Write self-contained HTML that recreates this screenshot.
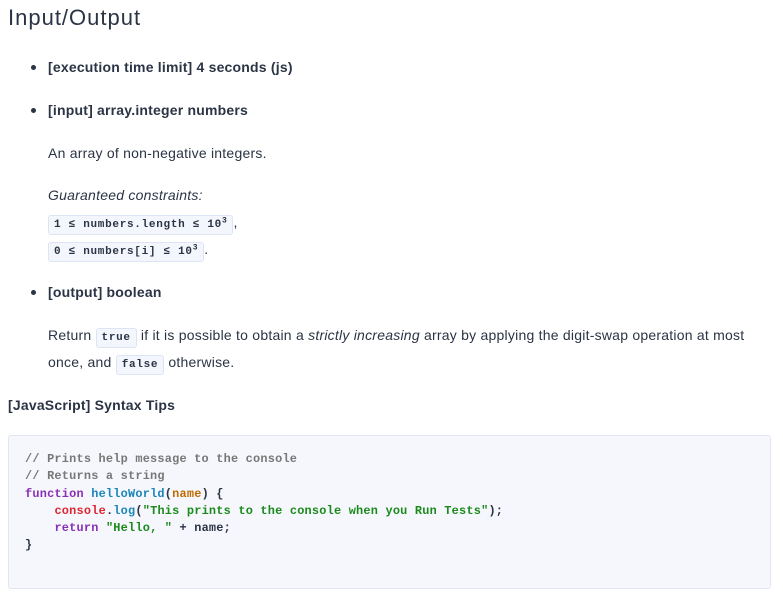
<!DOCTYPE html>
<html><head><meta charset="utf-8"><style>
body{margin:0;width:783px;height:594px;background:#fff;font-family:"Liberation Sans",sans-serif;color:#2b3445;position:relative;overflow:hidden}
.a{position:absolute;white-space:nowrap}
h1{position:absolute;left:8px;top:5px;margin:0;font-size:22px;letter-spacing:1px;font-weight:normal;color:#2b3445}
.b{font-weight:bold;font-size:14px;letter-spacing:0.2px}
.dot{position:absolute;width:5px;height:5px;border-radius:50%;background:#2b3445}
.t{font-size:14px;letter-spacing:0.23px}
code{font-family:"Liberation Mono",monospace;font-size:11px;letter-spacing:0.7px;font-weight:bold;background:#f3f6fd;border:1px solid #dde5f5;border-radius:3px;padding:3px 5px;color:#2b3445}
.box{position:absolute;left:8px;top:435px;width:761px;height:152px;background:#f5f7fd;border:1px solid #e0e6f3;border-radius:3px}
pre{position:absolute;left:25px;top:451px;margin:0;font-family:"Liberation Mono",monospace;font-size:11.9px;letter-spacing:0.22px;line-height:17.3px;font-weight:bold;color:#2b3445}
.c{color:#777;font-weight:bold}.k{color:#8a2fb5}.f{color:#1b86b8}.p{color:#c06a00}.s{color:#1a8a1a}.r{color:#e0252f}
</style></head><body>
<h1>Input/Output</h1>
<div class="dot" style="left:31px;top:65px"></div>
<div class="a b" style="left:48px;top:59px">[execution time limit] 4 seconds (js)</div>
<div class="dot" style="left:31px;top:108px"></div>
<div class="a b" style="left:48px;top:102px">[input] array.integer numbers</div>
<div class="a t" style="left:48px;top:145px">An array of non-negative integers.</div>
<div class="a t" style="left:48px;top:187px;font-style:italic">Guaranteed constraints:</div>
<div class="a t" style="left:48px;top:214px"><code>1 ≤ numbers.length ≤ 10<sup style="font-size:8px">3</sup></code>,</div>
<div class="a t" style="left:48px;top:241px"><code>0 ≤ numbers[i] ≤ 10<sup style="font-size:8px">3</sup></code>.</div>
<div class="dot" style="left:31px;top:290px"></div>
<div class="a b" style="left:48px;top:284px">[output] boolean</div>
<div class="a t" style="left:48px;top:327px">Return <code>true</code> if it is possible to obtain a <i>strictly increasing</i> array by applying the digit-swap operation at most</div>
<div class="a t" style="left:48px;top:354px">once, and <code>false</code> otherwise.</div>
<div class="a b" style="left:8px;top:397px">[JavaScript] Syntax Tips</div>
<div class="box"></div>
<pre><span class="c">// Prints help message to the console
// Returns a string</span>
<span class="k">function</span> <span class="f">helloWorld</span>(<span class="p">name</span>) {
    <span class="r">console</span>.<span class="f">log</span>(<span class="s">"This prints to the console when you Run Tests"</span>);
    <span class="k">return</span> <span class="s">"Hello, "</span> + name;
}</pre>
</body></html>
